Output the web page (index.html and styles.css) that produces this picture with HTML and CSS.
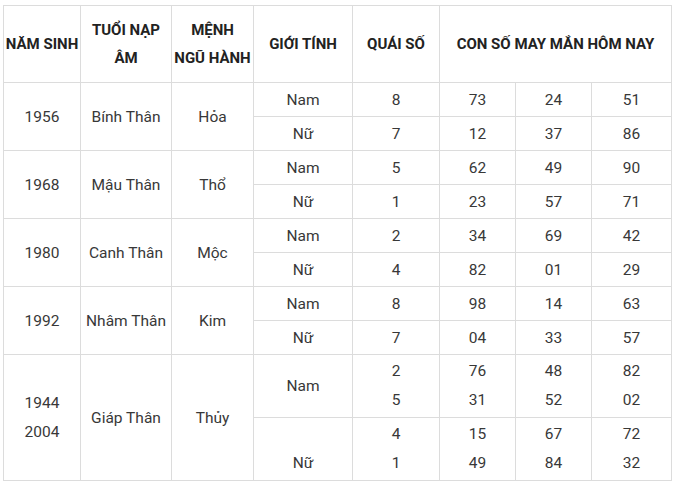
FILE: index.html
```html
<!DOCTYPE html>
<html>
<head>
<meta charset="utf-8">
<link rel="stylesheet" href="styles.css">
</head>
<body>
<div class="wrap">
<table class="tbl">
<colgroup>
<col class="c1"><col class="c2"><col class="c3"><col class="c4"><col class="c5"><col class="c6"><col class="c7"><col class="c8">
</colgroup>
<thead>
<tr class="head">
<th>NĂM SINH</th>
<th>TUỔI NẠP<br>ÂM</th>
<th>MỆNH<br>NGŨ HÀNH</th>
<th>GIỚI TÍNH</th>
<th>QUÁI SỐ</th>
<th colspan="3">CON SỐ MAY MẮN HÔM NAY</th>
</tr>
</thead>
<tbody>
<tr class="r"><td rowspan="2">1956</td><td rowspan="2">Bính Thân</td><td rowspan="2">Hỏa</td><td>Nam</td><td>8</td><td>73</td><td>24</td><td>51</td></tr>
<tr class="r"><td>Nữ</td><td>7</td><td>12</td><td>37</td><td>86</td></tr>
<tr class="r"><td rowspan="2">1968</td><td rowspan="2">Mậu Thân</td><td rowspan="2">Thổ</td><td>Nam</td><td>5</td><td>62</td><td>49</td><td>90</td></tr>
<tr class="r"><td>Nữ</td><td>1</td><td>23</td><td>57</td><td>71</td></tr>
<tr class="r"><td rowspan="2">1980</td><td rowspan="2">Canh Thân</td><td rowspan="2">Mộc</td><td>Nam</td><td>2</td><td>34</td><td>69</td><td>42</td></tr>
<tr class="r"><td>Nữ</td><td>4</td><td>82</td><td>01</td><td>29</td></tr>
<tr class="r"><td rowspan="2">1992</td><td rowspan="2">Nhâm Thân</td><td rowspan="2">Kim</td><td>Nam</td><td>8</td><td>98</td><td>14</td><td>63</td></tr>
<tr class="r"><td>Nữ</td><td>7</td><td>04</td><td>33</td><td>57</td></tr>
<tr class="rr"><td rowspan="2" class="lines">1944<br>2004</td><td rowspan="2">Giáp Thân</td><td rowspan="2">Thủy</td><td>Nam</td><td class="lines">2<br>5</td><td class="lines">76<br>31</td><td class="lines">48<br>52</td><td class="lines">82<br>02</td></tr>
<tr class="rr"><td class="lines"><br>Nữ</td><td class="lines">4<br>1</td><td class="lines">15<br>49</td><td class="lines">67<br>84</td><td class="lines">72<br>32</td></tr>
</tbody>
</table>
</div>
</body>
</html>
```

FILE: styles.css
```css
html, body {
  margin: 0;
  padding: 0;
  background: #fff;
}
.wrap {
  padding: 5px 0 0 3px;
}
.tbl {
  border-collapse: collapse;
  table-layout: fixed;
  width: 668px;
  font-family: Roboto, "Liberation Sans", sans-serif;
  font-size: 15.5px;
  color: #383838;
}
.c1 { width: 77px; }
.c2 { width: 91px; }
.c3 { width: 82px; }
.c4 { width: 99px; }
.c5 { width: 87px; }
.c6 { width: 76px; }
.c7 { width: 76px; }
.c8 { width: 80px; }
.tbl th, .tbl td {
  border: 1px solid #dcdcdc;
  text-align: center;
  vertical-align: middle;
  padding: 0;
}
.tbl th {
  font-weight: 700;
  font-size: 15px;
  color: #222;
  line-height: 28px;
}
.head { height: 77px; }
.r { height: 34px; }
.rr { height: 63px; }
.lines { line-height: 29px; }
```
